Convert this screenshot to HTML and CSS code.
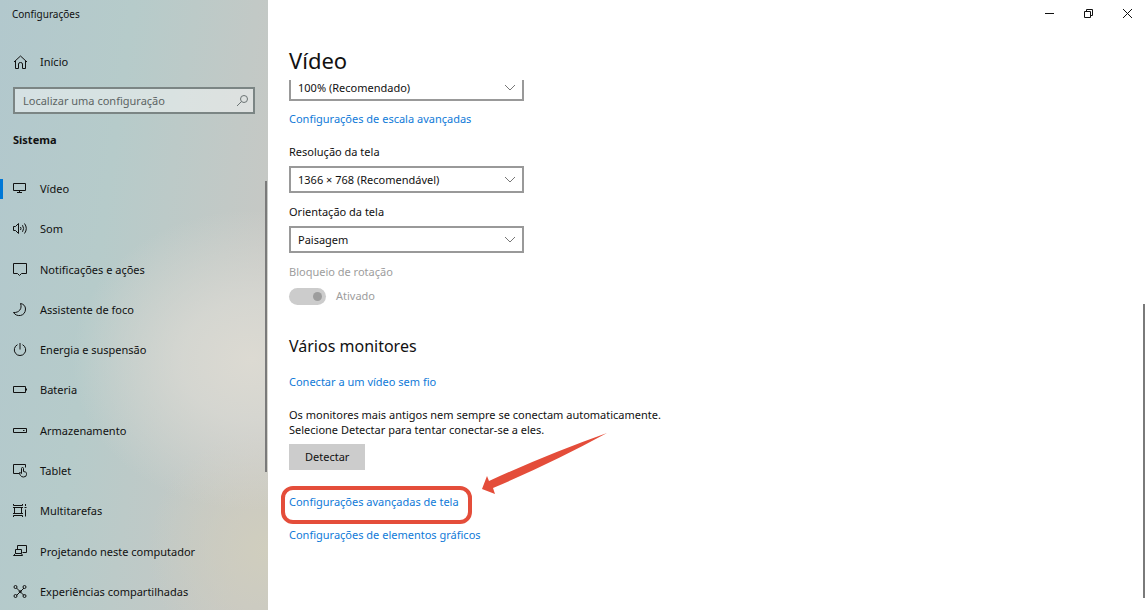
FILE: index.html
```html
<!DOCTYPE html>
<html lang="pt-BR">
<head>
  <meta charset="UTF-8" />
  <meta name="viewport" content="width=device-width, initial-scale=1" />
  <title>Configurações</title>
  <link rel="stylesheet" href="styles.css">
</head>
<body>

  <aside class="sidebar">
    <div class="app-title">Configurações</div>

    <a href="#" class="nav-link home">
      <svg class="icon" viewBox="0 0 16 16"><path d="M2 8 8.500 2l6.500 6M3.500 7v7.500h3V10q0-1.500 2-1.500t2 1.500v4.500h3V7"/></svg>
      Início
    </a>

    <form class="search">
      <input type="search" placeholder="Localizar uma configuração" aria-label="Localizar uma configuração">
      <button type="button" aria-label="Pesquisar">
        <svg class="icon" viewBox="0 0 16 16"><circle cx="10" cy="6" r="3.500"/><path d="M7.500 8.500 3 13"/></svg>
      </button>
    </form>

    <h2 class="category">Sistema</h2>

    <nav class="nav">
      <a href="#" class="nav-link active">
        <svg class="icon" viewBox="0 0 16 16"><path d="M1.500 2.500h12v7h-12zM7.500 9.500v2M5 11.500h5"/></svg>
        Vídeo
      </a>
      <a href="#" class="nav-link">
        <svg class="icon" viewBox="0 0 16 16"><path d="M1.500 5.500h2l3-3v10l-3-3h-2zM8.500 6q1 1.500 0 3M10.500 4.200q2.200 3.300 0 6.600M12.500 2.500q3.600 5 0 10"/></svg>
        Som
      </a>
      <a href="#" class="nav-link">
        <svg class="icon" viewBox="0 0 16 16"><path d="M1.500 1.500h13v10h-5l-2 2-2-2h-4z"/></svg>
        Notificações e ações
      </a>
      <a href="#" class="nav-link">
        <svg class="icon" viewBox="0 0 16 16"><path d="M8.500 1.500C10.500 6.500 7 11 1.500 10.500C4.500 15.500 13.500 14.500 13.500 7C13.500 4 11.500 2 8.500 1.500Z"/></svg>
        Assistente de foco
      </a>
      <a href="#" class="nav-link">
        <svg class="icon" viewBox="0 0 16 16"><path d="M8 1v6.500M5.500 2.700a5.700 5.700 0 1 0 5 0"/></svg>
        Energia e suspensão
      </a>
      <a href="#" class="nav-link">
        <svg class="icon" viewBox="0 0 16 16"><path d="M1.500 4.500h12v6h-12zM14.500 6.500v2"/></svg>
        Bateria
      </a>
      <a href="#" class="nav-link">
        <svg class="icon" viewBox="0 0 16 16"><path d="M1.500 5.500h13v4h-13zM11 7.500h1.500"/></svg>
        Armazenamento
      </a>
      <a href="#" class="nav-link">
        <svg class="icon" viewBox="0 0 16 16"><path d="M7 10.500H1.500v-9h12v3M9.500 10.500V5.500q0-1 1-1t1 1v3l2 .5q1 .3 1 1.500v1q0 2.500-3 2.500-2 0-3-1.500l-1.500-2.500q1-1 2.500.5"/></svg>
        Tablet
      </a>
      <a href="#" class="nav-link">
        <svg class="icon" viewBox="0 0 16 16"><path d="M2.500 4.500h7v6h-7zM1.500 1v1.500h9V1M1 4.500h10M1 10.500h10M1.500 14v-1.500h9V14M13.500 1v2M13.500 6.500v7M12.500 4.500h2"/></svg>
        Multitarefas
      </a>
      <a href="#" class="nav-link">
        <svg class="icon" viewBox="0 0 16 16"><path d="M5.500 5V1.500h9v7h-4M3.500 5.500h6v4h-6zM3.500 9.500l-2 2h9l-1-2"/></svg>
        Projetando neste computador
      </a>
      <a href="#" class="nav-link">
        <svg class="icon" viewBox="0 0 16 16"><path d="M4.500 4 12 11.500M12 4 4.500 11.500"/><circle cx="3.500" cy="3" r="1.500"/><circle cx="12.500" cy="3" r="1.500"/><circle cx="3.500" cy="12" r="1.500"/><circle cx="12.500" cy="12" r="1.500"/><circle cx="8.200" cy="7.700" r="1"/></svg>
        Experiências compartilhadas
      </a>
    </nav>
    <div class="scrollbar sidebar-scroll"></div>
  </aside>

  <main class="main">
    <div class="window-buttons">
      <button type="button" aria-label="Minimizar"><svg class="icon" viewBox="0 0 16 16"><path d="M4 8.500h9"/></svg></button>
      <button type="button" aria-label="Restaurar"><svg class="icon" viewBox="0 0 16 16"><path d="M4.500 6.500h6v6h-6zM6.500 6.500v-2h6v6h-2"/></svg></button>
      <button type="button" aria-label="Fechar"><svg class="icon" viewBox="0 0 16 16"><path d="M4 4l9 9M13 4l-9 9"/></svg></button>
    </div>

    <h1>Vídeo</h1>

    <div class="content">
      <div class="dropdown scale">
        <select aria-label="Escala">
          <option>100% (Recomendado)</option>
        </select>
        <svg class="icon chevron" viewBox="0 0 16 16"><path d="M3 5l5 5 5-5"/></svg>
      </div>
      <a href="#" class="link">Configurações de escala avançadas</a>

      <div class="field">
        <label for="resolution">Resolução da tela</label>
        <div class="dropdown">
          <select id="resolution">
            <option>1366 × 768 (Recomendável)</option>
          </select>
          <svg class="icon chevron" viewBox="0 0 16 16"><path d="M3 5l5 5 5-5"/></svg>
        </div>
      </div>

      <div class="field">
        <label for="orientation">Orientação da tela</label>
        <div class="dropdown">
          <select id="orientation">
            <option>Paisagem</option>
          </select>
          <svg class="icon chevron" viewBox="0 0 16 16"><path d="M3 5l5 5 5-5"/></svg>
        </div>
      </div>

      <div class="field disabled">
        <label for="rotation">Bloqueio de rotação</label>
        <div class="switch-row">
          <input type="checkbox" id="rotation" class="switch" checked disabled>
          <span>Ativado</span>
        </div>
      </div>

      <h2>Vários monitores</h2>
      <a href="#" class="link">Conectar a um vídeo sem fio</a>
      <p>Os monitores mais antigos nem sempre se conectam automaticamente. Selecione Detectar para tentar conectar-se a eles.</p>
      <button type="button" class="detect">Detectar</button>

      <div class="highlight">
        <a href="#" class="link">Configurações avançadas de tela</a>
        <svg class="arrow" viewBox="0 0 126 62"><path d="M125 0Q66 21 7 48L5 43 0 56 13 61 11 55Q70 30 125 0Z"/></svg>
      </div>
      <a href="#" class="link">Configurações de elementos gráficos</a>
    </div>
    <div class="scrollbar main-scroll"></div>
  </main>

</body>
</html>
```
FILE: styles.css
```css
* {
  box-sizing: border-box;
}
body {
  margin: 0;
  display: flex;
  height: 100vh;
  overflow: hidden;
  font-family: 'Segoe UI', 'Noto Sans', sans-serif;
  font-size: 11px;
  line-height: 16px;
  color: #111;
  background-color: #fff;
}
a {
  text-decoration: none;
}
button, input, select {
  font: inherit;
  color: inherit;
}
h1, h2, p {
  margin: 0;
}
.icon {
  width: 16px;
  height: 16px;
  flex: none;
  fill: none;
  stroke: currentColor;
}

/* sidebar */
.sidebar {
  position: relative;
  flex: 0 0 268px;
  display: flex;
  flex-direction: column;
  background:
    radial-gradient(ellipse 180px 150px at 94% 59%, #dcdad2 0, rgba(217, 217, 211, 0.8) 40%, rgba(210, 213, 209, 0) 100%),
    radial-gradient(circle at 100% 90%, #d0cebe 0, rgba(208, 206, 190, 0) 120px),
    linear-gradient(98deg, #b2c8cd 0%, #b6cbca 38%, #c8c8c4 90%);
}
.app-title {
  padding: 6px 12px;
  font-size: 10px;
}
.nav-link {
  display: flex;
  align-items: center;
  gap: 12px;
  padding: 0 12px;
  color: #111;
}
.home {
  height: 40px;
  margin-top: 14px;
}
.search {
  display: flex;
  align-items: center;
  height: 27px;
  margin: 5px 13px 0;
  border: 2px solid #7b8584;
  background-color: rgba(255, 255, 255, 0.45);
}
.search input {
  flex: 1;
  min-width: 0;
  padding: 0 8px;
  border: 0;
  outline: 0;
  background: none;
}
.search input::placeholder {
  color: #5c6464;
}
.search button {
  display: flex;
  padding: 0 3px;
  border: 0;
  background: none;
  color: #6c7474;
}
.category {
  margin: 18px 13px 21px;
  font-size: 11px;
  font-weight: 700;
}
.nav {
  flex: 1;
  display: flex;
  flex-direction: column;
  margin-bottom: -2px;
}
.nav .nav-link {
  flex: 1;
}
.active {
  background: linear-gradient(#0078d7, #0078d7) left center / 3px 20px no-repeat;
}
.scrollbar {
  position: absolute;
  width: 2px;
  background-color: #7a7a7a;
}
.sidebar-scroll {
  top: 181px;
  right: 1px;
  height: 291px;
}

/* main */
.main {
  position: relative;
  flex: 1;
  min-width: 0;
  display: flex;
  flex-direction: column;
  padding-left: 13px;
}
.window-buttons {
  display: flex;
  justify-content: flex-end;
}
.window-buttons button {
  display: flex;
  justify-content: center;
  width: 39px;
  padding: 5px 0;
  border: 0;
  background: none;
}
h1 {
  margin-top: 18px;
  padding-left: 8px;
  font-size: 22px;
  font-weight: 400;
  line-height: 32px;
}
.content {
  flex: 1;
  min-height: 0;
  margin-top: 4px;
  padding-left: 8px;
  display: flex;
  flex-direction: column;
  align-items: flex-start;
  overflow: hidden;
}
.content > * {
  flex-shrink: 0;
}
.dropdown {
  display: grid;
  align-items: center;
  width: 235px;
}
.dropdown select {
  grid-area: 1 / 1;
  height: 27px;
  padding: 0 7px;
  border: 2px solid #999;
  border-radius: 0;
  background-color: #fff;
  appearance: none;
}
.chevron {
  grid-area: 1 / 1;
  justify-self: end;
  margin-right: 6px;
  color: #777;
  pointer-events: none;
}
.scale {
  margin-top: -6px;
  margin-bottom: 10px;
}
.link {
  color: #0f7ad8;
}
.field {
  margin-top: 17px;
}
.field label {
  display: block;
  margin-bottom: 6px;
}
.field + .field {
  margin-top: 11px;
}
.disabled {
  color: #9d9d9d;
}
.switch-row {
  display: flex;
  align-items: center;
  gap: 10px;
  height: 20px;
}
.switch {
  display: flex;
  align-items: center;
  justify-content: flex-end;
  width: 37px;
  height: 17px;
  margin: 0;
  padding: 0 4px;
  border-radius: 9px;
  background-color: #ccc;
  appearance: none;
}
.switch::before {
  content: "";
  width: 9px;
  height: 9px;
  border-radius: 50%;
  background-color: #9d9d9d;
}
.content h2 {
  margin: 28px 0 16px;
  font-size: 16px;
  font-weight: 400;
  line-height: 24px;
}
.content p {
  max-width: 400px;
  margin: 17px 0 7px;
  line-height: 15px;
}
.detect {
  height: 26px;
  padding: 0 16px;
  border: 0;
  background-color: #ccc;
}
.highlight {
  position: relative;
  margin: 24px 0 17px;
}
/* red frame and arrow drawn over the page */
.highlight::before {
  content: "";
  position: absolute;
  inset: -8px -13px -14px -8px;
  border: 4px solid #e44d3a;
  border-radius: 12px;
  pointer-events: none;
}
.arrow {
  position: absolute;
  left: 193px;
  top: -61px;
  width: 126px;
  height: 62px;
  fill: #e44d3a;
  pointer-events: none;
}
.main-scroll {
  top: 304px;
  right: 1px;
  height: 294px;
}
```
